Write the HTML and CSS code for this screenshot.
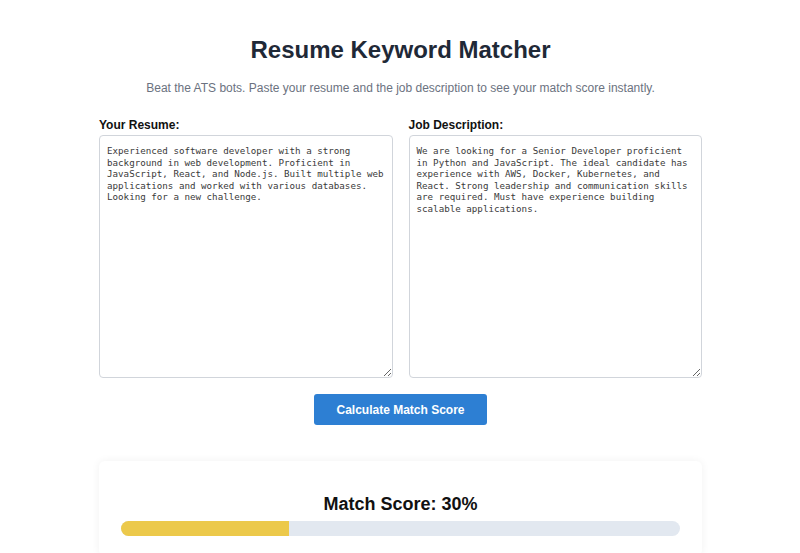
FILE: index.html
```html
<!DOCTYPE html>
<html lang="en">
<head>
    <meta charset="UTF-8">
    <meta name="viewport" content="width=device-width, initial-scale=1.0">
    <title>Resume Keyword Matcher</title>
    <link rel="stylesheet" href="styles.css">
</head>
<body>
    <div class="container">
        <h1>Resume Keyword Matcher</h1>
        <p class="subtitle">Beat the ATS bots. Paste your resume and the job description to see your match score instantly.</p>

        <div class="inputs">
            <div class="field">
                <label for="resume">Your Resume:</label>
                <textarea id="resume">Experienced software developer with a strong background in web development. Proficient in JavaScript, React, and Node.js. Built multiple web applications and worked with various databases. Looking for a new challenge.</textarea>
            </div>
            <div class="field">
                <label for="job">Job Description:</label>
                <textarea id="job">We are looking for a Senior Developer proficient in Python and JavaScript. The ideal candidate has experience with AWS, Docker, Kubernetes, and React. Strong leadership and communication skills are required. Must have experience building scalable applications.</textarea>
            </div>
        </div>

        <div class="actions">
            <button>Calculate Match Score</button>
        </div>

        <div class="result">
            <h2>Match Score: 30%</h2>
            <div class="progress">
                <div class="progress-fill" style="width: 30%"></div>
            </div>
        </div>
    </div>
</body>
</html>
```

FILE: styles.css
```css
body {
    font-family: "Liberation Sans", Arial, sans-serif;
    background-color: #ffffff;
    margin: 0;
    padding: 0;
}
.container {
    width: 603px;
    margin: 0 auto;
    padding-top: 35px;
    padding-left: 1px;
}
h1 {
    font-size: 24px;
    color: #1f2937;
    text-align: center;
    margin: 0 0 15px 0;
    line-height: 30px;
}
.subtitle {
    font-size: 12px;
    color: #6b7280;
    text-align: center;
    margin: 0 0 22px 0;
    line-height: 16px;
}
.inputs {
    display: grid;
    grid-template-columns: 1fr 1fr;
    gap: 16px;
}
.field {
    display: flex;
    flex-direction: column;
}
label {
    font-size: 12px;
    font-weight: bold;
    color: #111;
    margin-bottom: 2px;
    line-height: 15px;
}
textarea {
    height: 243px;
    box-sizing: border-box;
    font-family: "DejaVu Sans Mono", "Liberation Mono", monospace;
    font-size: 9.2px;
    line-height: 11.5px;
    color: #3a3a3a;
    padding: 9px 7px;
    border: 1px solid #d1d5db;
    border-radius: 4px;
    resize: vertical;
}
.actions {
    display: flex;
    justify-content: center;
    margin-top: 16px;
}
button {
    background-color: #2d7fd3;
    color: white;
    font-family: "Liberation Sans", Arial, sans-serif;
    font-size: 12px;
    font-weight: bold;
    width: 173px;
    height: 31px;
    border: none;
    border-radius: 3px;
    cursor: pointer;
}
.result {
    margin-top: 36px;
    padding: 32px 22px 20px;
    border-radius: 6px;
    box-shadow: 0 0 8px rgba(0, 0, 0, 0.06);
}
h2 {
    font-size: 18px;
    color: #111;
    text-align: center;
    margin: 0 0 6px 0;
    line-height: 22px;
}
.progress {
    height: 15px;
    background-color: #e2e8f0;
    border-radius: 8px;
    overflow: hidden;
}
.progress-fill {
    height: 100%;
    background-color: #ecc94b;
}
```
